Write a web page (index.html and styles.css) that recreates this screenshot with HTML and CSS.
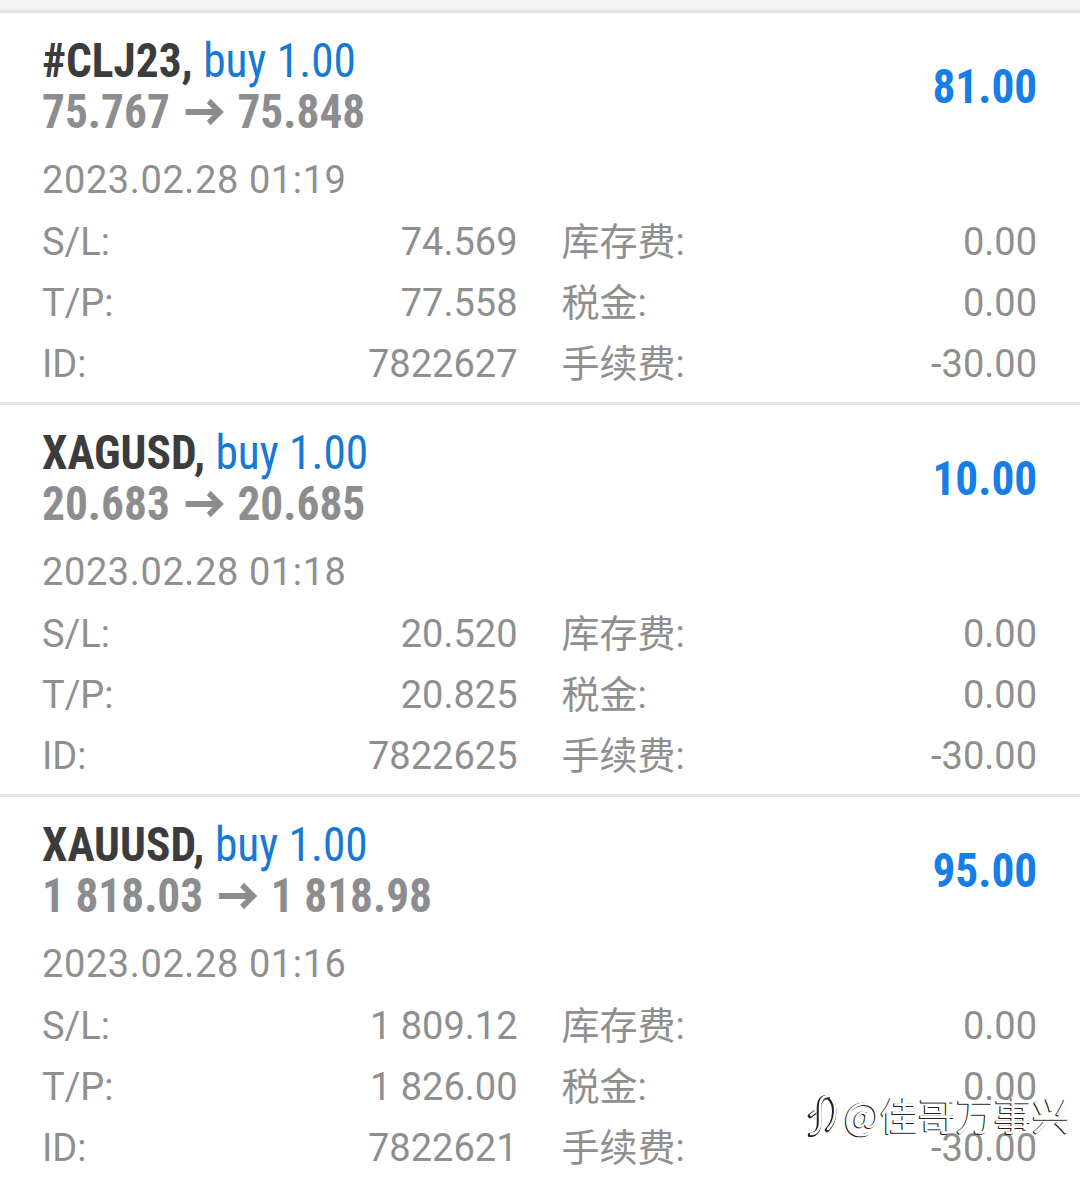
FILE: index.html
```html
<!DOCTYPE html>
<html lang="zh">
<head>
  <meta charset="UTF-8" />
  <title>交易历史</title>
  <link rel="stylesheet" href="styles.css">
</head>
<body>
  <div class="topbar"></div>

  <div class="deal">
    <div class="deal-head">
      <div class="deal-title">
        <div class="symbol">#CLJ23, <span class="side">buy 1.00</span></div>
        <div class="prices">75.767<svg class="arrow" width="44" height="30" viewBox="0 0 44 30"><path d="M2 15 H39 M27 4 L39 15 L27 26" /></svg>75.848</div>
      </div>
      <div class="profit">81.00</div>
    </div>
    <div class="date">2023.02.28 01:19</div>
    <div class="details">
      <div class="row"><span>S/L:</span><span>74.569</span></div>
      <div class="row"><span>库存费:</span><span>0.00</span></div>
      <div class="row"><span>T/P:</span><span>77.558</span></div>
      <div class="row"><span>税金:</span><span>0.00</span></div>
      <div class="row"><span>ID:</span><span>7822627</span></div>
      <div class="row"><span>手续费:</span><span>-30.00</span></div>
    </div>
  </div>

  <div class="deal">
    <div class="deal-head">
      <div class="deal-title">
        <div class="symbol">XAGUSD, <span class="side">buy 1.00</span></div>
        <div class="prices">20.683<svg class="arrow" width="44" height="30" viewBox="0 0 44 30"><path d="M2 15 H39 M27 4 L39 15 L27 26" /></svg>20.685</div>
      </div>
      <div class="profit">10.00</div>
    </div>
    <div class="date">2023.02.28 01:18</div>
    <div class="details">
      <div class="row"><span>S/L:</span><span>20.520</span></div>
      <div class="row"><span>库存费:</span><span>0.00</span></div>
      <div class="row"><span>T/P:</span><span>20.825</span></div>
      <div class="row"><span>税金:</span><span>0.00</span></div>
      <div class="row"><span>ID:</span><span>7822625</span></div>
      <div class="row"><span>手续费:</span><span>-30.00</span></div>
    </div>
  </div>

  <div class="deal">
    <div class="deal-head">
      <div class="deal-title">
        <div class="symbol">XAUUSD, <span class="side">buy 1.00</span></div>
        <div class="prices">1 818.03<svg class="arrow" width="44" height="30" viewBox="0 0 44 30"><path d="M2 15 H39 M27 4 L39 15 L27 26" /></svg>1 818.98</div>
      </div>
      <div class="profit">95.00</div>
    </div>
    <div class="date">2023.02.28 01:16</div>
    <div class="details">
      <div class="row"><span>S/L:</span><span>1 809.12</span></div>
      <div class="row"><span>库存费:</span><span>0.00</span></div>
      <div class="row"><span>T/P:</span><span>1 826.00</span></div>
      <div class="row"><span>税金:</span><span>0.00</span></div>
      <div class="row"><span>ID:</span><span>7822621</span></div>
      <div class="row"><span>手续费:</span><span>-30.00</span></div>
    </div>
  </div>

  <!-- водяной знак -->
  <div class="watermark">
    <svg class="wm-logo" width="36" height="46" viewBox="0 0 36 46">
      <g fill="none" stroke-linecap="round" stroke-linejoin="round">
        <path d="M23 5 C17 5 14 9 14 16 L14 32 C14 39 10 43 5 43 M5 24 L9 21 M25 7 C31 13 31 29 22 38" stroke="#222" stroke-width="4.5" transform="translate(-1 1)"/>
        <path d="M23 5 C17 5 14 9 14 16 L14 32 C14 39 10 43 5 43 M5 24 L9 21 M25 7 C31 13 31 29 22 38" stroke="#fff" stroke-width="2.5"/>
      </g>
    </svg>
    <span class="wm-text">@佳哥万事兴</span>
  </div>
</body>
</html>
```

FILE: styles.css
```css
body {
  margin: 0;
  padding: 0;
  background: #ffffff;
  font-family: Roboto, "Noto Sans CJK SC", sans-serif;
  color: #8f8f8f;
  position: relative;
  overflow: hidden;
}

.topbar {
  height: 10px;
  background: #f5f5f5;
  border-bottom: 3px solid #e3e3e3;
}

.deal {
  padding: 22px 43px 7px 42px;
  border-bottom: 3px solid #e3e3e3;
}

.deal-head {
  display: flex;
  justify-content: space-between;
  align-items: center;
}

/* у нас нет Roboto Condensed, поэтому сжимаем обычный Roboto */
.deal-title {
  transform: scaleX(0.926);
  transform-origin: left center;
  white-space: nowrap;
}

.symbol,
.prices,
.profit {
  font-family: "Roboto Condensed", Roboto, sans-serif;
  font-size: 49px;
  line-height: 51px;
  font-weight: 700;
}

.symbol {
  color: #3c3c3c;
}

.side {
  font-weight: 400;
  color: #1778d6;
}

.prices {
  color: #8d8d8f;
}

.arrow {
  margin: 0 14px 0 15px;
  vertical-align: 1px;
}

.arrow path {
  fill: none;
  stroke: #8d8d8f;
  stroke-width: 6;
  stroke-linecap: butt;
  stroke-linejoin: miter;
}

.profit {
  color: #167ee6;
  transform: scaleX(0.926);
  transform-origin: right center;
}

.date {
  margin-top: 13px;
  font-size: 38px;
  line-height: 60px;
  letter-spacing: 0.6px;
}

.details {
  margin-top: 2px;
  display: grid;
  grid-template-columns: 1fr 1fr;
  column-gap: 44px;
  font-size: 38px;
  line-height: 61px;
}

.row {
  display: flex;
  justify-content: space-between;
}

.watermark {
  position: absolute;
  right: 10px;
  bottom: 50px;
  display: flex;
  align-items: center;
  gap: 2px;
}

.wm-text {
  font-family: "Noto Sans CJK SC", sans-serif;
  font-size: 38px;
  line-height: 50px;
  color: #ffffff;
  text-shadow: -1px 1px 0 #222, -1px 0 0 #333;
}
```
